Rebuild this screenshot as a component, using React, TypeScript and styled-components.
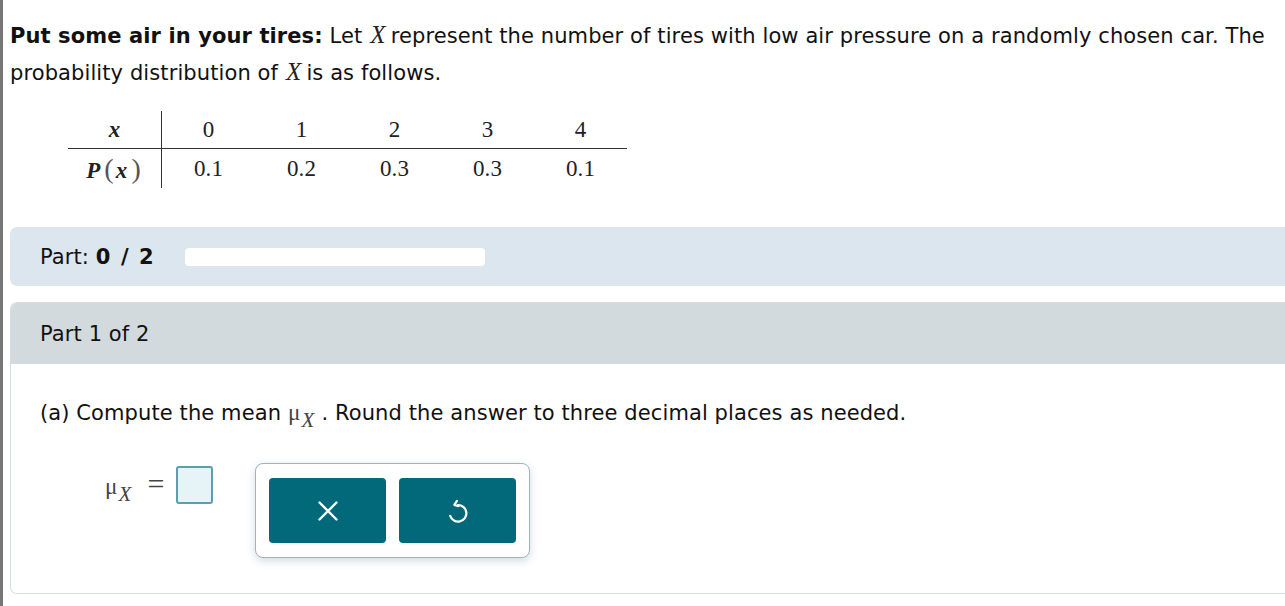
import React from "react"
import styled, { createGlobalStyle } from "styled-components"

const GlobalStyle = createGlobalStyle`
  html, body {
    margin: 0;
    padding: 0;
    background: #fff;
    overflow: hidden;
  }
  body {
    font-family: "DejaVu Sans", Verdana, sans-serif;
    color: #111;
    letter-spacing: 0.1px;
  }
`

const Page = styled.div`
  min-height: 606px;
  border-left: 3px solid #777;
  padding: 17px 0 0 7px;
  box-sizing: border-box;
`

const Intro = styled.p`
  margin: 0;
  font-size: 21px;
  line-height: 36px;
  padding-right: 10px;
`

const MathVar = styled.span`
  font-family: "Liberation Serif", "Times New Roman", serif;
  font-style: italic;
  font-size: 25px;
  color: #222;
  margin: 0 5px 0 8px;
`

const Table = styled.table`
  margin: 20px 0 0 58px;
  border-collapse: collapse;
  font-family: "Liberation Serif", "Times New Roman", serif;
  font-size: 23px;
  color: #222;
`

const Cell = styled.td<{ $head?: boolean; $top?: boolean }>`
  width: 93px;
  padding: 0;
  height: ${(p) => (p.$top ? "37px" : "39px")};
  text-align: center;
  vertical-align: middle;
  font-weight: ${(p) => (p.$head ? "bold" : "normal")};
  font-style: ${(p) => (p.$head ? "italic" : "normal")};
  border-right: ${(p) => (p.$head ? "1px solid #333" : "none")};
  border-bottom: ${(p) => (p.$top ? "1px solid #333" : "none")};
`

const Paren = styled.span`
  font-style: normal;
  font-weight: normal;
  font-size: 28px;
  color: #555;
  margin: 0 2px 0 4px;
`

const Progress = styled.div`
  margin: 39px -8px 0 0;
  height: 59px;
  background: #dbe6ef;
  border-radius: 7px 0 0 7px;
  display: flex;
  align-items: center;
  padding-left: 30px;
  gap: 31px;
  font-size: 21px;
`

const Bold = styled.b`
  word-spacing: 3px;
`

const Track = styled.div`
  width: 300px;
  height: 18px;
  background: #fff;
  border-radius: 4px;
`

const Card = styled.section`
  margin: 16px -8px 0 0;
  border: 1px solid #d5dde0;
  border-right: none;
  border-radius: 7px 0 0 7px;
  overflow: hidden;
`

const CardHeader = styled.div`
  height: 61px;
  background: #d2dadd;
  display: flex;
  align-items: center;
  padding-left: 29px;
  font-size: 21px;
`

const CardBody = styled.div`
  height: 229px;
  padding: 36px 0 0 29px;
  box-sizing: border-box;
  background: #fff;
`

const Question = styled.p`
  margin: 0;
  font-size: 21px;
  line-height: 26px;
  display: flex;
  align-items: baseline;
  gap: 7px;
`

const Mu = styled.span`
  font-family: "Liberation Serif", "Times New Roman", serif;
  font-size: 23px;
  color: #444;
  white-space: nowrap;
`

const Sub = styled.span`
  font-style: italic;
  font-size: 21px;
  position: relative;
  top: 7px;
  margin-left: 1px;
`

const AnswerRow = styled.div`
  display: flex;
  align-items: flex-start;
  margin-top: 37px;
  padding-left: 65px;
`

const Equation = styled.div`
  display: flex;
  align-items: baseline;
  gap: 16px;
  margin-top: 8px;
  font-family: "Liberation Serif", "Times New Roman", serif;
  color: #444;
`

const Equals = styled.span`
  font-size: 30px;
  line-height: 26px;
`

const Blank = styled.div`
  width: 33px;
  height: 34px;
  margin: 3px 0 0 12px;
  border: 2px solid #5b9eae;
  border-radius: 3px;
  background: #e6f4f8;
  flex-shrink: 0;
`

const Tools = styled.div`
  margin-left: 42px;
  display: flex;
  gap: 13px;
  padding: 14px 13px;
  border: 1px solid #9fb3bb;
  border-radius: 8px;
  box-shadow: 0 3px 8px rgba(60, 90, 100, 0.22);
  background: #fff;
`

const ToolButton = styled.button`
  width: 117px;
  height: 65px;
  border: none;
  border-radius: 4px;
  background: #02697b;
  color: #fff;
  display: flex;
  align-items: center;
  justify-content: center;
  padding: 0;
  cursor: pointer;
  flex-shrink: 0;
`

const Icon = styled.svg<{ $size: number }>`
  width: ${(p) => p.$size}px;
  height: ${(p) => p.$size}px;
  flex-shrink: 0;
  display: block;
`

const CloseIcon = () => (
  <Icon $size={24} viewBox="0 0 24 24" fill="none" stroke="#fff" strokeWidth="2.4" strokeLinecap="round">
    <path d="M3.5 3.5l17 17M20.5 3.5l-17 17" />
  </Icon>
)

const UndoIcon = () => (
  <Icon $size={28} viewBox="0 0 28 28" fill="none" stroke="#fff" strokeWidth="2.2" strokeLinecap="round" strokeLinejoin="round">
    <path d="M14 8a8.3 8.3 0 1 1-7.8 10.9" />
    <path d="M13 3.8L10.3 7.9l4.3 1.3" />
  </Icon>
)

const values = [
  { x: "0", p: "0.1" },
  { x: "1", p: "0.2" },
  { x: "2", p: "0.3" },
  { x: "3", p: "0.3" },
  { x: "4", p: "0.1" },
]

export default function App() {
  return (
    <Page>
      <GlobalStyle />
      <Intro>
        <b>Put some air in your tires:</b> Let<MathVar>X</MathVar>represent the number of tires with low air
        pressure on a randomly chosen car. The probability distribution of<MathVar>X</MathVar>is as follows.
      </Intro>

      <Table>
        <tbody>
          <tr>
            <Cell $head $top>x</Cell>
            {values.map((v) => (
              <Cell key={v.x} $top>{v.x}</Cell>
            ))}
          </tr>
          <tr>
            <Cell $head>
              P<Paren>(</Paren>x<Paren>)</Paren>
            </Cell>
            {values.map((v) => (
              <Cell key={v.x}>{v.p}</Cell>
            ))}
          </tr>
        </tbody>
      </Table>

      <Progress>
        <span>
          Part: <Bold>0 / 2</Bold>
        </span>
        <Track />
      </Progress>

      <Card>
        <CardHeader>Part 1 of 2</CardHeader>
        <CardBody>
          <Question>
            (a) Compute the mean
            <Mu>
              μ<Sub>X</Sub>
            </Mu>
            . Round the answer to three decimal places as needed.
          </Question>
          <AnswerRow>
            <Equation>
              <Mu>
                μ<Sub>X</Sub>
              </Mu>
              <Equals>=</Equals>
            </Equation>
            <Blank />
            <Tools>
              <ToolButton aria-label="clear">
                <CloseIcon />
              </ToolButton>
              <ToolButton aria-label="undo">
                <UndoIcon />
              </ToolButton>
            </Tools>
          </AnswerRow>
        </CardBody>
      </Card>
    </Page>
  )
}
